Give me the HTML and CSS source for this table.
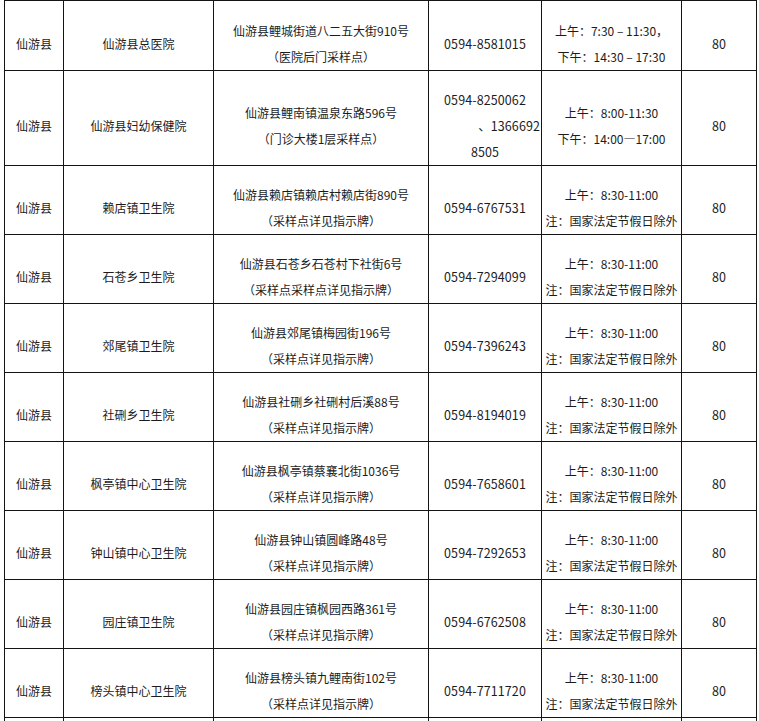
FILE: index.html
```html
<!DOCTYPE html>
<html lang="zh-CN">
<head>
<meta charset="utf-8">
<title>仙游县采样点</title>
<link rel="stylesheet" href="styles.css">
</head>
<body>
<table class="sites">
  <colgroup>
    <col class="c-county">
    <col class="c-name">
    <col class="c-addr">
    <col class="c-phone">
    <col class="c-time">
    <col class="c-num">
  </colgroup>
  <tbody>
    <tr class="first">
      <td>仙游县</td>
      <td>仙游县总医院</td>
      <td><div>仙游县鲤城街道八二五大街910号</div><div>（医院后门采样点）</div></td>
      <td class="phone">0594-8581015</td>
      <td><div>上午：7:30 – 11:30，</div><div>下午：14:30 – 17:30</div></td>
      <td class="num">80</td>
    </tr>
    <tr>
      <td>仙游县</td>
      <td>仙游县妇幼保健院</td>
      <td><div>仙游县鲤南镇温泉东路596号</div><div>（门诊大楼1层采样点）</div></td>
      <td class="phone"><div>0594-8250062</div><div class="wrap-right">、1366692</div><div>8505</div></td>
      <td><div>上午：8:00-11:30</div><div>下午：14:00—17:00</div></td>
      <td class="num">80</td>
    </tr>
    <tr>
      <td>仙游县</td>
      <td>赖店镇卫生院</td>
      <td><div>仙游县赖店镇赖店村赖店街890号</div><div>（采样点详见指示牌）</div></td>
      <td class="phone">0594-6767531</td>
      <td><div>上午：8:30-11:00</div><div>注：国家法定节假日除外</div></td>
      <td class="num">80</td>
    </tr>
    <tr>
      <td>仙游县</td>
      <td>石苍乡卫生院</td>
      <td><div>仙游县石苍乡石苍村下社街6号</div><div>（采样点采样点详见指示牌）</div></td>
      <td class="phone">0594-7294099</td>
      <td><div>上午：8:30-11:00</div><div>注：国家法定节假日除外</div></td>
      <td class="num">80</td>
    </tr>
    <tr>
      <td>仙游县</td>
      <td>郊尾镇卫生院</td>
      <td><div>仙游县郊尾镇梅园街196号</div><div>（采样点详见指示牌）</div></td>
      <td class="phone">0594-7396243</td>
      <td><div>上午：8:30-11:00</div><div>注：国家法定节假日除外</div></td>
      <td class="num">80</td>
    </tr>
    <tr>
      <td>仙游县</td>
      <td>社硎乡卫生院</td>
      <td><div>仙游县社硎乡社硎村后溪88号</div><div>（采样点详见指示牌）</div></td>
      <td class="phone">0594-8194019</td>
      <td><div>上午：8:30-11:00</div><div>注：国家法定节假日除外</div></td>
      <td class="num">80</td>
    </tr>
    <tr>
      <td>仙游县</td>
      <td>枫亭镇中心卫生院</td>
      <td><div>仙游县枫亭镇蔡襄北街1036号</div><div>（采样点详见指示牌）</div></td>
      <td class="phone">0594-7658601</td>
      <td><div>上午：8:30-11:00</div><div>注：国家法定节假日除外</div></td>
      <td class="num">80</td>
    </tr>
    <tr>
      <td>仙游县</td>
      <td>钟山镇中心卫生院</td>
      <td><div>仙游县钟山镇圆峰路48号</div><div>（采样点详见指示牌）</div></td>
      <td class="phone">0594-7292653</td>
      <td><div>上午：8:30-11:00</div><div>注：国家法定节假日除外</div></td>
      <td class="num">80</td>
    </tr>
    <tr>
      <td>仙游县</td>
      <td>园庄镇卫生院</td>
      <td><div>仙游县园庄镇枫园西路361号</div><div>（采样点详见指示牌）</div></td>
      <td class="phone">0594-6762508</td>
      <td><div>上午：8:30-11:00</div><div>注：国家法定节假日除外</div></td>
      <td class="num">80</td>
    </tr>
    <tr>
      <td>仙游县</td>
      <td>榜头镇中心卫生院</td>
      <td><div>仙游县榜头镇九鲤南街102号</div><div>（采样点详见指示牌）</div></td>
      <td class="phone">0594-7711720</td>
      <td><div>上午：8:30-11:00</div><div>注：国家法定节假日除外</div></td>
      <td class="num">80</td>
    </tr>
    <tr class="next">
      <td></td>
      <td></td>
      <td></td>
      <td></td>
      <td></td>
      <td></td>
    </tr>
  </tbody>
</table>
</body>
</html>
```

FILE: styles.css
```css
html, body {
  margin: 0;
  padding: 0;
  background: #ffffff;
  overflow: hidden;
}

body {
  font-family: "Noto Sans CJK SC", "Noto Sans", sans-serif;
  font-size: 12px;
  color: #1c1c1c;
}

.sites {
  margin-left: 4px;
  width: 752px;
  table-layout: fixed;
  border-collapse: collapse;
}

.c-county { width: 59px; }
.c-name { width: 150px; }
.c-addr { width: 215px; }
.c-phone { width: 113px; }
.c-time { width: 140px; }
.c-num { width: 75px; }

.sites td {
  border: 1px solid #141414;
  padding: 16px 0 0 0;
  line-height: 26px;
  text-align: center;
  vertical-align: middle;
  white-space: nowrap;
  overflow: hidden;
}

.sites .first td {
  padding-top: 17px;
}

.sites .next td {
  height: 52px;
}

.sites .phone {
  font-size: 12.5px;
  letter-spacing: 0.1px;
}

.sites .wrap-right {
  text-align: right;
  padding-right: 1px;
}

.sites .num {
  font-size: 12.5px;
}
```
